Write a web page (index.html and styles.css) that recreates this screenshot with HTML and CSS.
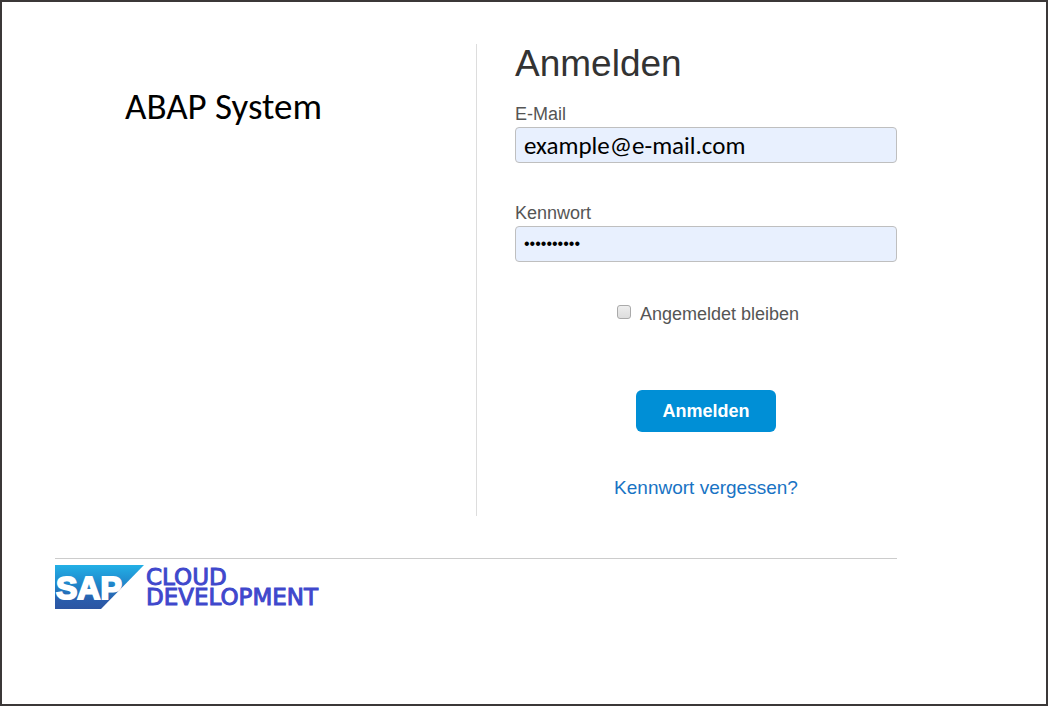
FILE: index.html
```html
<!DOCTYPE html>
<html lang="de">
<head>
<meta charset="utf-8">
<meta name="viewport" content="width=device-width, initial-scale=1">
<title>Anmelden</title>
<link rel="stylesheet" href="styles.css">
</head>
<body>
<div class="page">
  <main class="panels">
    <section class="intro">
      <h2 class="system-name">ABAP System</h2>
    </section>
    <form class="login">
      <h1 class="title">Anmelden</h1>
      <div class="field">
        <label for="email">E-Mail</label>
        <input class="box email" id="email" type="text" value="example@e-mail.com">
      </div>
      <div class="field">
        <label for="password">Kennwort</label>
        <input class="box password" id="password" type="password" value="abcdefghij">
      </div>
      <div class="remember">
        <input class="tick" id="remember" type="checkbox">
        <label for="remember">Angemeldet bleiben</label>
      </div>
      <button class="submit" type="submit">Anmelden</button>
      <a class="forgot" href="#">Kennwort vergessen?</a>
    </form>
  </main>
  <footer class="footer">
    <svg class="logo" viewBox="0 0 89 44" role="img" aria-label="SAP">
      <defs>
        <linearGradient id="blue" x1="0" y1="0" x2="0" y2="1">
          <stop offset="0" stop-color="#23b0e6"/>
          <stop offset="0.5" stop-color="#2080c6"/>
          <stop offset="0.8" stop-color="#2a5cab"/>
          <stop offset="1" stop-color="#2c55a2"/>
        </linearGradient>
      </defs>
      <path d="M0 0H89L46 44H0Z" fill="url(#blue)"/>
      <text class="logo-text" x="1" y="34">SAP</text>
    </svg>
    <p class="product">CLOUD<br>DEVELOPMENT</p>
  </footer>
</div>
</body>
</html>
```
FILE: styles.css
```css
* {
  box-sizing: border-box;
}

body {
  margin: 0;
  background: #fff;
  color: #555;
  font-family: "Liberation Sans", Arial, sans-serif;
  font-size: 18px;
  line-height: 20px;
}

.page {
  min-height: 100vh;
  padding: 42px 149px 42px 53px;
  border: 2px solid #3b3838;
}

.panels {
  display: grid;
  grid-template-columns: 1fr 1fr;
}

.intro {
  padding: 40px 0 0 70px;
}

.system-name {
  margin: 0;
  color: #000;
  font-family: Calibri, Carlito, "Noto Sans", sans-serif;
  font-size: 37px;
  font-weight: 400;
  line-height: 46px;
}

.login {
  display: flex;
  flex-direction: column;
  padding: 0 0 18px 38px;
  border-left: 1px solid #ddd;
}

.title {
  margin: 0 0 20px;
  color: #333;
  font-size: 37px;
  font-weight: 400;
  line-height: 40px;
}

.field {
  display: flex;
  flex-direction: column;
  gap: 3px;
  margin-bottom: 40px;
}

.box {
  width: 100%;
  height: 36px;
  padding: 0 8px;
  border: 1px solid #bfbfbf;
  border-radius: 4px;
  background: #e8f0fe;
  color: #000;
}

.email {
  font-family: Calibri, Carlito, "Noto Sans", sans-serif;
  font-size: 25px;
}

.password {
  font-family: "Liberation Sans", Arial, sans-serif;
  font-size: 16px;
}

.remember {
  display: flex;
  align-items: center;
  justify-content: center;
  gap: 9px;
  margin-top: 2px;
  padding-left: 4px;
}

.tick {
  appearance: none;
  width: 14px;
  height: 14px;
  margin: 0 0 4px;
  border: 1px solid #aaa;
  border-radius: 3px;
  background: linear-gradient(#eee, #ddd);
}

.tick:checked {
  background: #008fd3;
}

.submit {
  align-self: center;
  margin: 66px 0 46px;
  padding: 11px 26px;
  border: 0;
  border-radius: 6px;
  background: #008fd6;
  color: #fff;
  font: bold 18px/20px "Liberation Sans", Arial, sans-serif;
}

.forgot {
  align-self: center;
  color: #1873c4;
  font-size: 19px;
  text-decoration: none;
}

.footer {
  display: flex;
  gap: 2px;
  margin-top: 42px;
  padding-top: 6px;
  border-top: 1px solid #ccc;
}

.logo {
  width: 89px;
  height: 44px;
}

.logo-text {
  fill: #fff;
  stroke: #fff;
  stroke-width: 2px;
  font: bold 32px "Liberation Sans", Arial, sans-serif;
}

.product {
  margin: 2px 0 0;
  color: #3f48cc;
  font-family: "DejaVu Sans", sans-serif;
  font-size: 23px;
  line-height: 20px;
  -webkit-text-stroke: 1px #3f48cc;
}
```
